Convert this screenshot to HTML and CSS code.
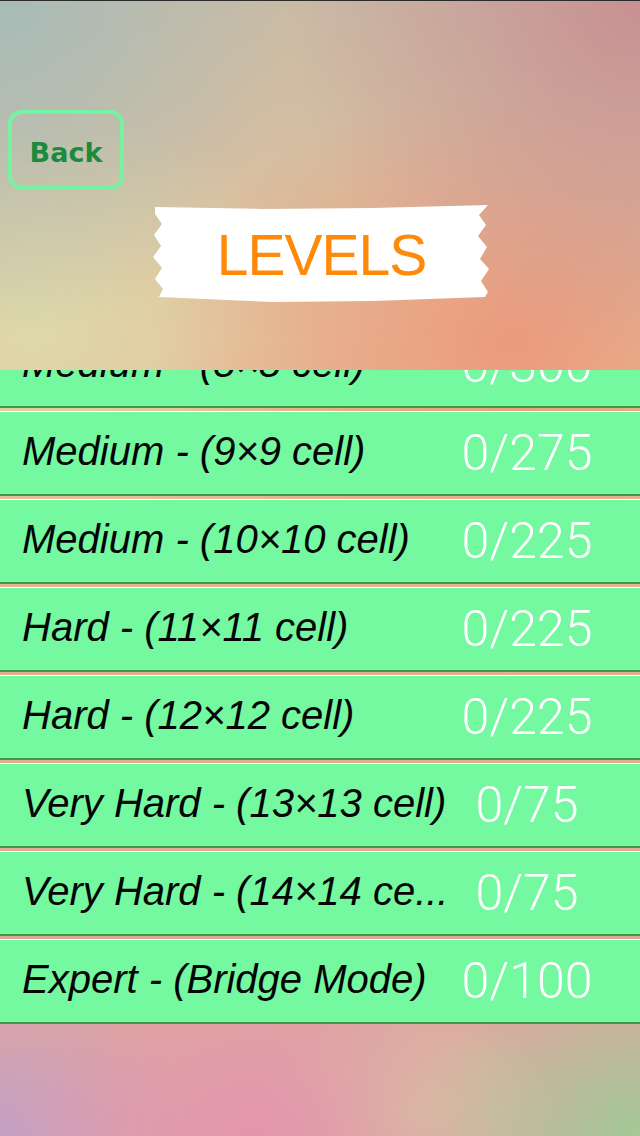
FILE: index.html
```html
<!DOCTYPE html>
<html>
<head>
<meta charset="utf-8">
<link rel="stylesheet" href="styles.css">
</head>
<body>
<div class="page">
  <header class="header">
    <div class="back">Back</div>
    <div class="banner"><span class="banner-text">LEVELS</span></div>
  </header>
  <main class="list">
    <div class="list-inner">
      <div class="row"><div class="label">Medium - (8×8 cell)</div><div class="count">0/300</div></div>
      <div class="row"><div class="label">Medium - (9×9 cell)</div><div class="count">0/275</div></div>
      <div class="row"><div class="label">Medium - (10×10 cell)</div><div class="count">0/225</div></div>
      <div class="row"><div class="label">Hard - (11×11 cell)</div><div class="count">0/225</div></div>
      <div class="row"><div class="label">Hard - (12×12 cell)</div><div class="count">0/225</div></div>
      <div class="row"><div class="label">Very Hard - (13×13 cell)</div><div class="count">0/75</div></div>
      <div class="row"><div class="label">Very Hard - (14×14 ce...</div><div class="count">0/75</div></div>
      <div class="row"><div class="label">Expert - (Bridge Mode)</div><div class="count">0/100</div></div>
    </div>
  </main>
</div>
</body>
</html>
```

FILE: styles.css
```css
html, body {
  margin: 0;
  padding: 0;
}
body {
  width: 640px;
  height: 1136px;
  overflow: hidden;
  font-family: "Liberation Sans", Arial, sans-serif;
  background:
    radial-gradient(ellipse 45% 30% at 0% 0%, rgba(165,188,185,0.95), rgba(165,188,185,0)),
    radial-gradient(ellipse 55% 32% at 100% 0%, rgba(200,142,145,0.95), rgba(200,142,145,0)),
    radial-gradient(ellipse 55% 22% at 80% 30%, rgba(236,152,122,0.95), rgba(236,152,122,0)),
    radial-gradient(ellipse 45% 20% at 5% 29%, rgba(222,218,170,0.95), rgba(222,218,170,0)),
    radial-gradient(ellipse 38% 16% at 40% 100%, rgba(228,150,172,1), rgba(228,150,172,0)),
    radial-gradient(ellipse 35% 16% at 100% 100%, rgba(162,202,150,1), rgba(162,202,150,0)),
    radial-gradient(ellipse 30% 14% at 0% 100%, rgba(196,160,196,1), rgba(196,160,196,0)),
    radial-gradient(ellipse 25% 10% at 65% 98%, rgba(214,196,160,1), rgba(214,196,160,0)),
    linear-gradient(180deg, #c9bba6 0%, #e4c29c 30%, #e6ad90 60%, #dca4a6 100%);
}
.page {
  display: flex;
  flex-direction: column;
  height: 1136px;
}
.header {
  border-top: 1px solid #2b2b2b;
  box-sizing: border-box;
  height: 370px;
  padding-top: 109px;
  display: flex;
  flex-direction: column;
}
.back {
  margin-left: 8px;
  width: 116px;
  height: 80px;
  box-sizing: border-box;
  border: 4px solid #76f3a1;
  border-radius: 14px;
  display: flex;
  align-items: center;
  justify-content: center;
  color: #1d8a3e;
  font-family: "DejaVu Sans", Verdana, sans-serif;
  font-weight: bold;
  font-size: 27px;
  padding-top: 4px;
}
.banner {
  align-self: center;
  margin-top: 15px;
  margin-left: 3px;
  width: 337px;
  height: 98px;
  background: #ffffff;
  display: flex;
  align-items: center;
  justify-content: center;
  clip-path: polygon(
    2px 2px, 110px 4px, 220px 3px, 335px 0px,
    326px 10px, 333px 20px, 325px 31px, 334px 42px, 327px 54px, 336px 64px, 328px 76px, 335px 87px, 332px 92px,
    220px 96px, 120px 97px, 6px 92px,
    10px 84px, 2px 74px, 9px 63px, 0px 52px, 8px 41px, 1px 30px, 9px 19px, 2px 9px
  );
}
.banner-text {
  color: #ff8a0a;
  font-family: "Liberation Sans", Arial, sans-serif;
  font-size: 57px;
  letter-spacing: -1px;
  line-height: 1;
  padding-top: 3px;
}
.list {
  flex: 1;
  overflow: hidden;
}
.list-inner {
  margin-top: -47px;
  display: flex;
  flex-direction: column;
  gap: 3px;
}
.row {
  height: 82px;
  border-top: 1px solid #ffffff;
  border-bottom: 2px solid #3d9b45;
  background: #74f8a0;
  display: flex;
  align-items: center;
}
.label {
  flex: 0 0 426px;
  padding-left: 22px;
  padding-bottom: 3px;
  font-style: italic;
  font-size: 40px;
  color: #050505;
  white-space: nowrap;
  overflow: hidden;
}
.count {
  flex: 0 0 158px;
  text-align: center;
  color: #ffffff;
  font-family: Roboto, "Liberation Sans", sans-serif;
  font-weight: 300;
  font-size: 50px;
}
```
